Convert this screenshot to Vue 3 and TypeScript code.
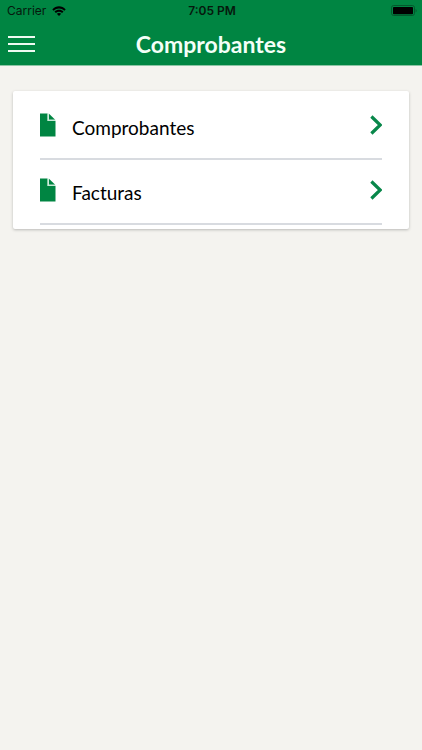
<script setup lang="ts">
interface MenuEntry {
  label: string
  href: string
}

const entries: MenuEntry[] = [
  { label: 'Comprobantes', href: '#comprobantes' },
  { label: 'Facturas', href: '#facturas' },
]
</script>

<template>
  <div class="screen">
    <header class="header">
      <div class="status">
        <div class="carrier">
          <span>Carrier</span>
          <svg class="wifi" viewBox="0 0 14 10" aria-hidden="true">
            <path d="M0.3 3.4C4 -0.8 10 -0.8 13.7 3.4L12.3 4.8C9.2 1.6 4.8 1.6 1.7 4.8Z" />
            <path d="M2.5 5.6C5 3 9 3 11.5 5.6L10.1 7C8.2 5.2 5.8 5.2 3.9 7Z" />
            <path d="M4.8 7.8C6.1 6.6 7.9 6.6 9.2 7.8L7 10Z" />
          </svg>
        </div>
        <span class="time">7:05 PM</span>
        <svg class="battery" viewBox="0 0 26 12" aria-hidden="true">
          <rect class="battery-case" x="0.5" y="0.5" width="23" height="10" rx="2.2" />
          <rect x="2" y="2" width="20" height="7.2" rx="0.8" />
          <path class="battery-tip" d="M24.6 4C26 4.4 26 7 24.6 7.4Z" />
        </svg>
      </div>
      <div class="toolbar">
        <button class="menu" type="button" aria-label="Menú">
          <span class="bar"></span>
          <span class="bar"></span>
          <span class="bar"></span>
        </button>
        <h1 class="title">Comprobantes</h1>
      </div>
    </header>

    <main class="content">
      <nav class="card">
        <a v-for="entry in entries" :key="entry.href" class="row" :href="entry.href">
          <svg class="doc" viewBox="0 0 16 24" aria-hidden="true">
            <path d="M0 0.5H7.6V8H15.5V23.5H0Z" />
            <path d="M9 0.8L15.2 6.7H9Z" />
            <path class="fold" d="M8.2 0.5V7.4H15.5" />
          </svg>
          <span class="label">{{ entry.label }}</span>
          <svg class="chevron" viewBox="0 0 12 20" aria-hidden="true">
            <path d="M1.4 1.5L10.2 10L1.4 18.5" />
          </svg>
        </a>
      </nav>
    </main>
  </div>
</template>

<style>
body {
  background: #f4f3ef;
}
</style>

<style scoped>
.screen {
  min-height: 100vh;
  background: #f4f3ef;
  font-family: Lato, "Open Sans", sans-serif;
}

.header {
  background: #008542;
  border-bottom: 1px solid #8cc5a5;
}

.status {
  display: grid;
  grid-template-columns: 1fr auto 1fr;
  align-items: center;
  height: 22px;
  padding: 0 5px 0 7px;
  color: #06180d;
  fill: #000;
  font: 12px/22px Inter, sans-serif;
}

.carrier {
  display: flex;
  align-items: center;
  gap: 6px;
}

.wifi {
  width: 14px;
  height: 10px;
}

.time {
  font-weight: 600;
}

.battery {
  justify-self: end;
  width: 26px;
  height: 12px;
}

.battery-case {
  fill: none;
  stroke: #04582d;
}

.battery-tip {
  fill: #04582d;
}

.toolbar {
  display: grid;
  grid-template-columns: 27px 1fr 27px;
  align-items: center;
  height: 43px;
  padding: 0 8px;
}

.menu {
  display: flex;
  flex-direction: column;
  gap: 5px;
  padding: 0;
  border: 0;
  background: none;
}

.bar {
  width: 27px;
  height: 2px;
  background: #eefaf2;
}

.title {
  margin: 0;
  color: #f4fff8;
  font-size: 23px;
  font-weight: 700;
  line-height: 44px;
  text-align: center;
}

.content {
  padding: 25px 13px;
}

.card {
  padding: 4px 27px;
  border-radius: 2px;
  background: #fff;
  box-shadow: 0 1px 3px rgba(0, 0, 0, 0.24);
}

.row {
  display: flex;
  align-items: center;
  height: 60px;
  padding-bottom: 3px;
  border-bottom: 2px solid #d8dbe0;
  color: #000;
  text-decoration: none;
}

.doc {
  width: 16px;
  height: 24px;
  fill: #008542;
}

.fold {
  fill: none;
  stroke: #c5ead5;
  stroke-width: 1.2;
}

.label {
  flex: 1;
  padding: 6px 0 0 16px;
  font-size: 19px;
  line-height: 24px;
}

.chevron {
  width: 12px;
  height: 20px;
  fill: none;
  stroke: #08874a;
  stroke-width: 3.2;
}
</style>
